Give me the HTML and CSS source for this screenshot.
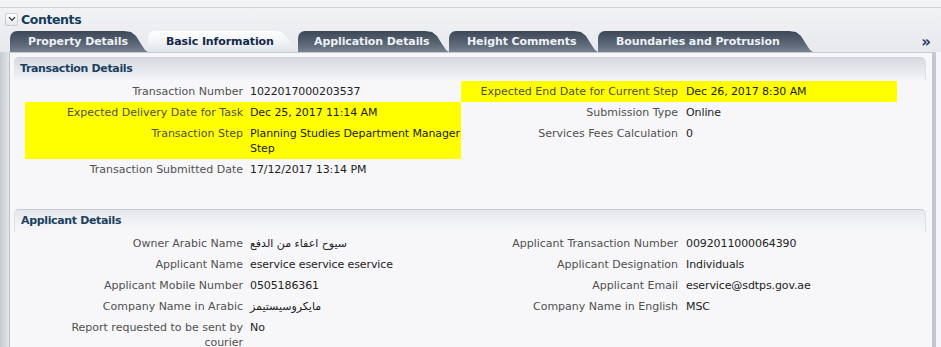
FILE: index.html
```html
<!DOCTYPE html>
<html lang="en">
<head>
    <meta charset="UTF-8">
    <meta name="viewport" content="width=device-width, initial-scale=1.0">
    <title>Contents</title>
    <link rel="stylesheet" href="styles.css">
</head>
<body>
    <div class="topline"></div>

    <!-- Contents header -->
    <div class="contents-bar">
        <span class="toggle">
            <svg width="8" height="6" viewBox="0 0 8 6"><path d="M1 1.2 L4 4.4 L7 1.2" fill="none" stroke="#2b2b2b" stroke-width="1.2"/></svg>
        </span>
        <span class="contents-title">Contents</span>
    </div>

    <!-- Tabs -->
    <div class="tabs">
        <div class="tab tab-property">Property Details</div>
        <div class="tab tab-basic selected">Basic Information</div>
        <div class="tab tab-application">Application Details</div>
        <div class="tab tab-height">Height Comments</div>
        <div class="tab tab-boundaries">Boundaries and Protrusion</div>
        <span class="more">&raquo;</span>
    </div>

    <!-- Panel -->
    <div class="panel-wrap">
        <div class="panel">
            <section class="group">
                <div class="group-header">Transaction Details</div>
                <div class="cols">
                    <div class="col">
                        <div class="row"><div class="label">Transaction Number</div><div class="value">1022017000203537</div></div>
                        <div class="row hl"><div class="label">Expected Delivery Date for Task</div><div class="value">Dec 25, 2017 11:14 AM</div></div>
                        <div class="row hl"><div class="label">Transaction Step</div><div class="value">Planning Studies Department Manager Step</div></div>
                        <div class="row"><div class="label">Transaction Submitted Date</div><div class="value">17/12/2017 13:14 PM</div></div>
                    </div>
                    <div class="col col-right">
                        <div class="row hl"><div class="label">Expected End Date for Current Step</div><div class="value">Dec 26, 2017 8:30 AM</div></div>
                        <div class="row"><div class="label">Submission Type</div><div class="value">Online</div></div>
                        <div class="row"><div class="label">Services Fees Calculation</div><div class="value">0</div></div>
                    </div>
                </div>
            </section>

            <section class="group applicant">
                <div class="group-header">Applicant Details</div>
                <div class="cols">
                    <div class="col">
                        <div class="row"><div class="label">Owner Arabic Name</div><div class="value">سيوح اعفاء من الدفع</div></div>
                        <div class="row"><div class="label">Applicant Name</div><div class="value">eservice eservice eservice</div></div>
                        <div class="row"><div class="label">Applicant Mobile Number</div><div class="value">0505186361</div></div>
                        <div class="row"><div class="label">Company Name in Arabic</div><div class="value">مايكروسيستيمز</div></div>
                        <div class="row"><div class="label">Report requested to be sent by courier</div><div class="value">No</div></div>
                    </div>
                    <div class="col col-right">
                        <div class="row"><div class="label">Applicant Transaction Number</div><div class="value">0092011000064390</div></div>
                        <div class="row"><div class="label">Applicant Designation</div><div class="value">Individuals</div></div>
                        <div class="row"><div class="label">Applicant Email</div><div class="value">eservice@sdtps.gov.ae</div></div>
                        <div class="row"><div class="label">Company Name in English</div><div class="value">MSC</div></div>
                    </div>
                </div>
            </section>
        </div>
    </div>
</body>
</html>
```

FILE: styles.css
```css
body {
    margin: 0;
    font-family: "DejaVu Sans", Verdana, sans-serif;
    font-size: 11px;
    background: linear-gradient(#f3f4f6, #e7e9ed 52px);
    color: #333;
    overflow: hidden;
}

.topline {
    height: 7px;
    border-bottom: 1px solid #d0d4db;
}

/* Contents header */
.contents-bar {
    display: flex;
    align-items: center;
    height: 22px;
    padding-left: 5px;
}

.toggle {
    display: flex;
    align-items: center;
    justify-content: center;
    width: 11px;
    height: 11px;
    border: 1px solid #c9cdd4;
    border-radius: 2px;
    background: linear-gradient(#ffffff, #e6e8ec);
    margin-right: 3px;
}

.contents-title {
    font-size: 12.5px;
    font-weight: bold;
    letter-spacing: -0.4px;
    color: #143d5c;
}

/* Tabs */
.tabs {
    display: flex;
    align-items: flex-end;
    height: 21px;
    margin-top: 1px;
    padding-left: 10px;
}

.tab {
    box-sizing: border-box;
    height: 21px;
    line-height: 21px;
    padding-left: 18px;
    font-weight: bold;
    letter-spacing: -0.1px;
    color: #eef1f5;
    background: linear-gradient(#3c4858, #5a6575 60%, #77818e);
    border-top-left-radius: 7px;
    clip-path: polygon(0 0, calc(100% - 24px) 0, calc(100% - 17px) 1px, calc(100% - 12px) 5px, calc(100% - 7px) 13px, calc(100% - 3px) 19px, 100% 100%, 0 100%);
    white-space: nowrap;
}

.tab.selected {
    color: #13284a;
    background: linear-gradient(#ffffff, #f1f3f6 50%, #dfe3e8);
}

.tab-property { width: 138px; }
.tab-basic { width: 150px; }
.tab-application { width: 151px; padding-left: 16px; }
.tab-height { width: 149px; }
.tab-boundaries { width: 215px; }

.more {
    margin-left: auto;
    margin-right: 10px;
    align-self: center;
    font-size: 15px;
    font-weight: bold;
    color: #1d3b6b;
}

/* Panel */
.panel-wrap {
    background: linear-gradient(to right, #c6cbd3, #e1e4e8 9px, #f5f6f8 9px);
    height: 300px;
}

.panel {
    margin-left: 9px;
    margin-right: 5px;
    height: 100%;
    border-top: 1px solid #c6cbd3;
    border-left: 1px solid #bcc3cc;
    border-right: 4px solid #c3c8d0;
    background: #f7f7f9;
}

.group-header {
    margin: 4px 6px 0 4px;
    height: 22px;
    line-height: 22px;
    padding-left: 6px;
    border-top: 1px solid #d2d6dc;
    border-right: 1px solid #dde0e5;
    border-radius: 5px 5px 0 0;
    background: linear-gradient(#d6dae0, #eaecf0 70%, #f5f6f8);
    font-weight: bold;
    letter-spacing: -0.35px;
    color: #1b3f5f;
}

.applicant .group-header {
    margin-top: 29px;
    border-top-color: #c6cbd3;
    border-left: 1px solid #dde0e5;
    background: linear-gradient(#e5e8ec, #f2f3f6 70%, #f7f7f9);
}

.cols {
    display: flex;
    padding-left: 15px;
    margin-top: 1px;
}

.col {
    width: 436px;
}

.row {
    display: flex;
    padding: 3px 0 3px 8px;
    line-height: 15px;
}

.row.hl {
    background: #ffff00;
}

.label {
    width: 210px;
    flex-shrink: 0;
    text-align: right;
    color: #505050;
}

.value {
    width: 211px;
    margin-left: 7px;
    letter-spacing: -0.1px;
    color: #222;
}

.col-right .row {
    padding-left: 0;
}

.col-right .label {
    width: 217px;
}

.col-right .value {
    margin-left: 8px;
}
```
